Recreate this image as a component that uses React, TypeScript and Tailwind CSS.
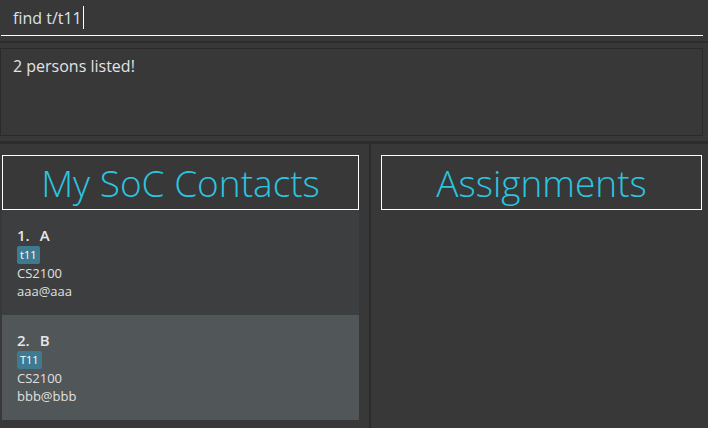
import React from "react";

const persons = [
  { idx: 1, name: "A", tag: "t11", module: "CS2100", email: "aaa@aaa", bg: "bg-[#3c3e3f]" },
  { idx: 2, name: "B", tag: "T11", module: "CS2100", email: "bbb@bbb", bg: "bg-[#515658]" },
];

export default function App() {
  return (
    <div
      className="w-[708px] h-[428px] bg-[#383838] flex flex-col overflow-hidden"
      style={{ fontFamily: '"Open Sans", "Noto Sans", sans-serif' }}
    >
      {/* command box */}
      <div className="h-[36px] pl-[1px] pr-[5px]">
        <div className="h-full border-b border-white flex items-center pl-[12px]">
          <span className="text-[16px] text-[#d9e3ee] leading-none">find t/t11</span>
          <span className="ml-[1px] w-[1px] h-[23px] bg-white" />
        </div>
      </div>
      <div className="h-[5px]" />
      <div className="h-[2px] bg-[#2c2c2c]" />
      <div className="h-[5px]" />
      {/* result box */}
      <div className="h-[88px] mr-[5px] border border-[#2a2a2a] px-[12px] pt-[6px]">
        <div className="text-[16px] text-[#e2e2e2] leading-[22px]">2 persons listed!</div>
      </div>
      <div className="h-[5px]" />
      <div className="h-[3px] bg-[#2c2c2c]" />
      {/* main */}
      <div className="flex-1 flex">
        <div className="w-[369px] pl-[2px] pr-[10px] pt-[11px] flex flex-col">
          <div className="h-[55px] border border-white flex items-center justify-center">
            <span className="text-[37px] font-light text-[#2bc5e0] leading-none">My SoC Contacts</span>
          </div>
          {persons.map((p) => (
            <div key={p.idx} className={`${p.bg} h-[105px] pl-[15px] pt-[15px] flex flex-col items-start`}>
              <div className="text-[15px] font-semibold text-[#e6e6e6] leading-[20px] flex">
                <span>{p.idx}.</span>
                <span className="ml-[10px]">{p.name}</span>
              </div>
              <div className="mt-[1px] bg-[#3e7b91] text-white text-[11px] leading-[14px] px-[3px] py-[2px] rounded-[2px]">
                {p.tag}
              </div>
              <div className="text-[13px] text-[#e0e0e0] leading-[18px]">{p.module}</div>
              <div className="text-[13px] text-[#e0e0e0] leading-[18px]">{p.email}</div>
            </div>
          ))}
        </div>
        <div className="w-[2px] bg-[#2b2b2b]" />
        <div className="flex-1 pl-[10px] pr-[6px] pt-[11px]">
          <div className="h-[55px] border border-white flex items-center justify-center">
            <span className="text-[37px] font-light text-[#2bc5e0] leading-none">Assignments</span>
          </div>
        </div>
      </div>
    </div>
  );
}
